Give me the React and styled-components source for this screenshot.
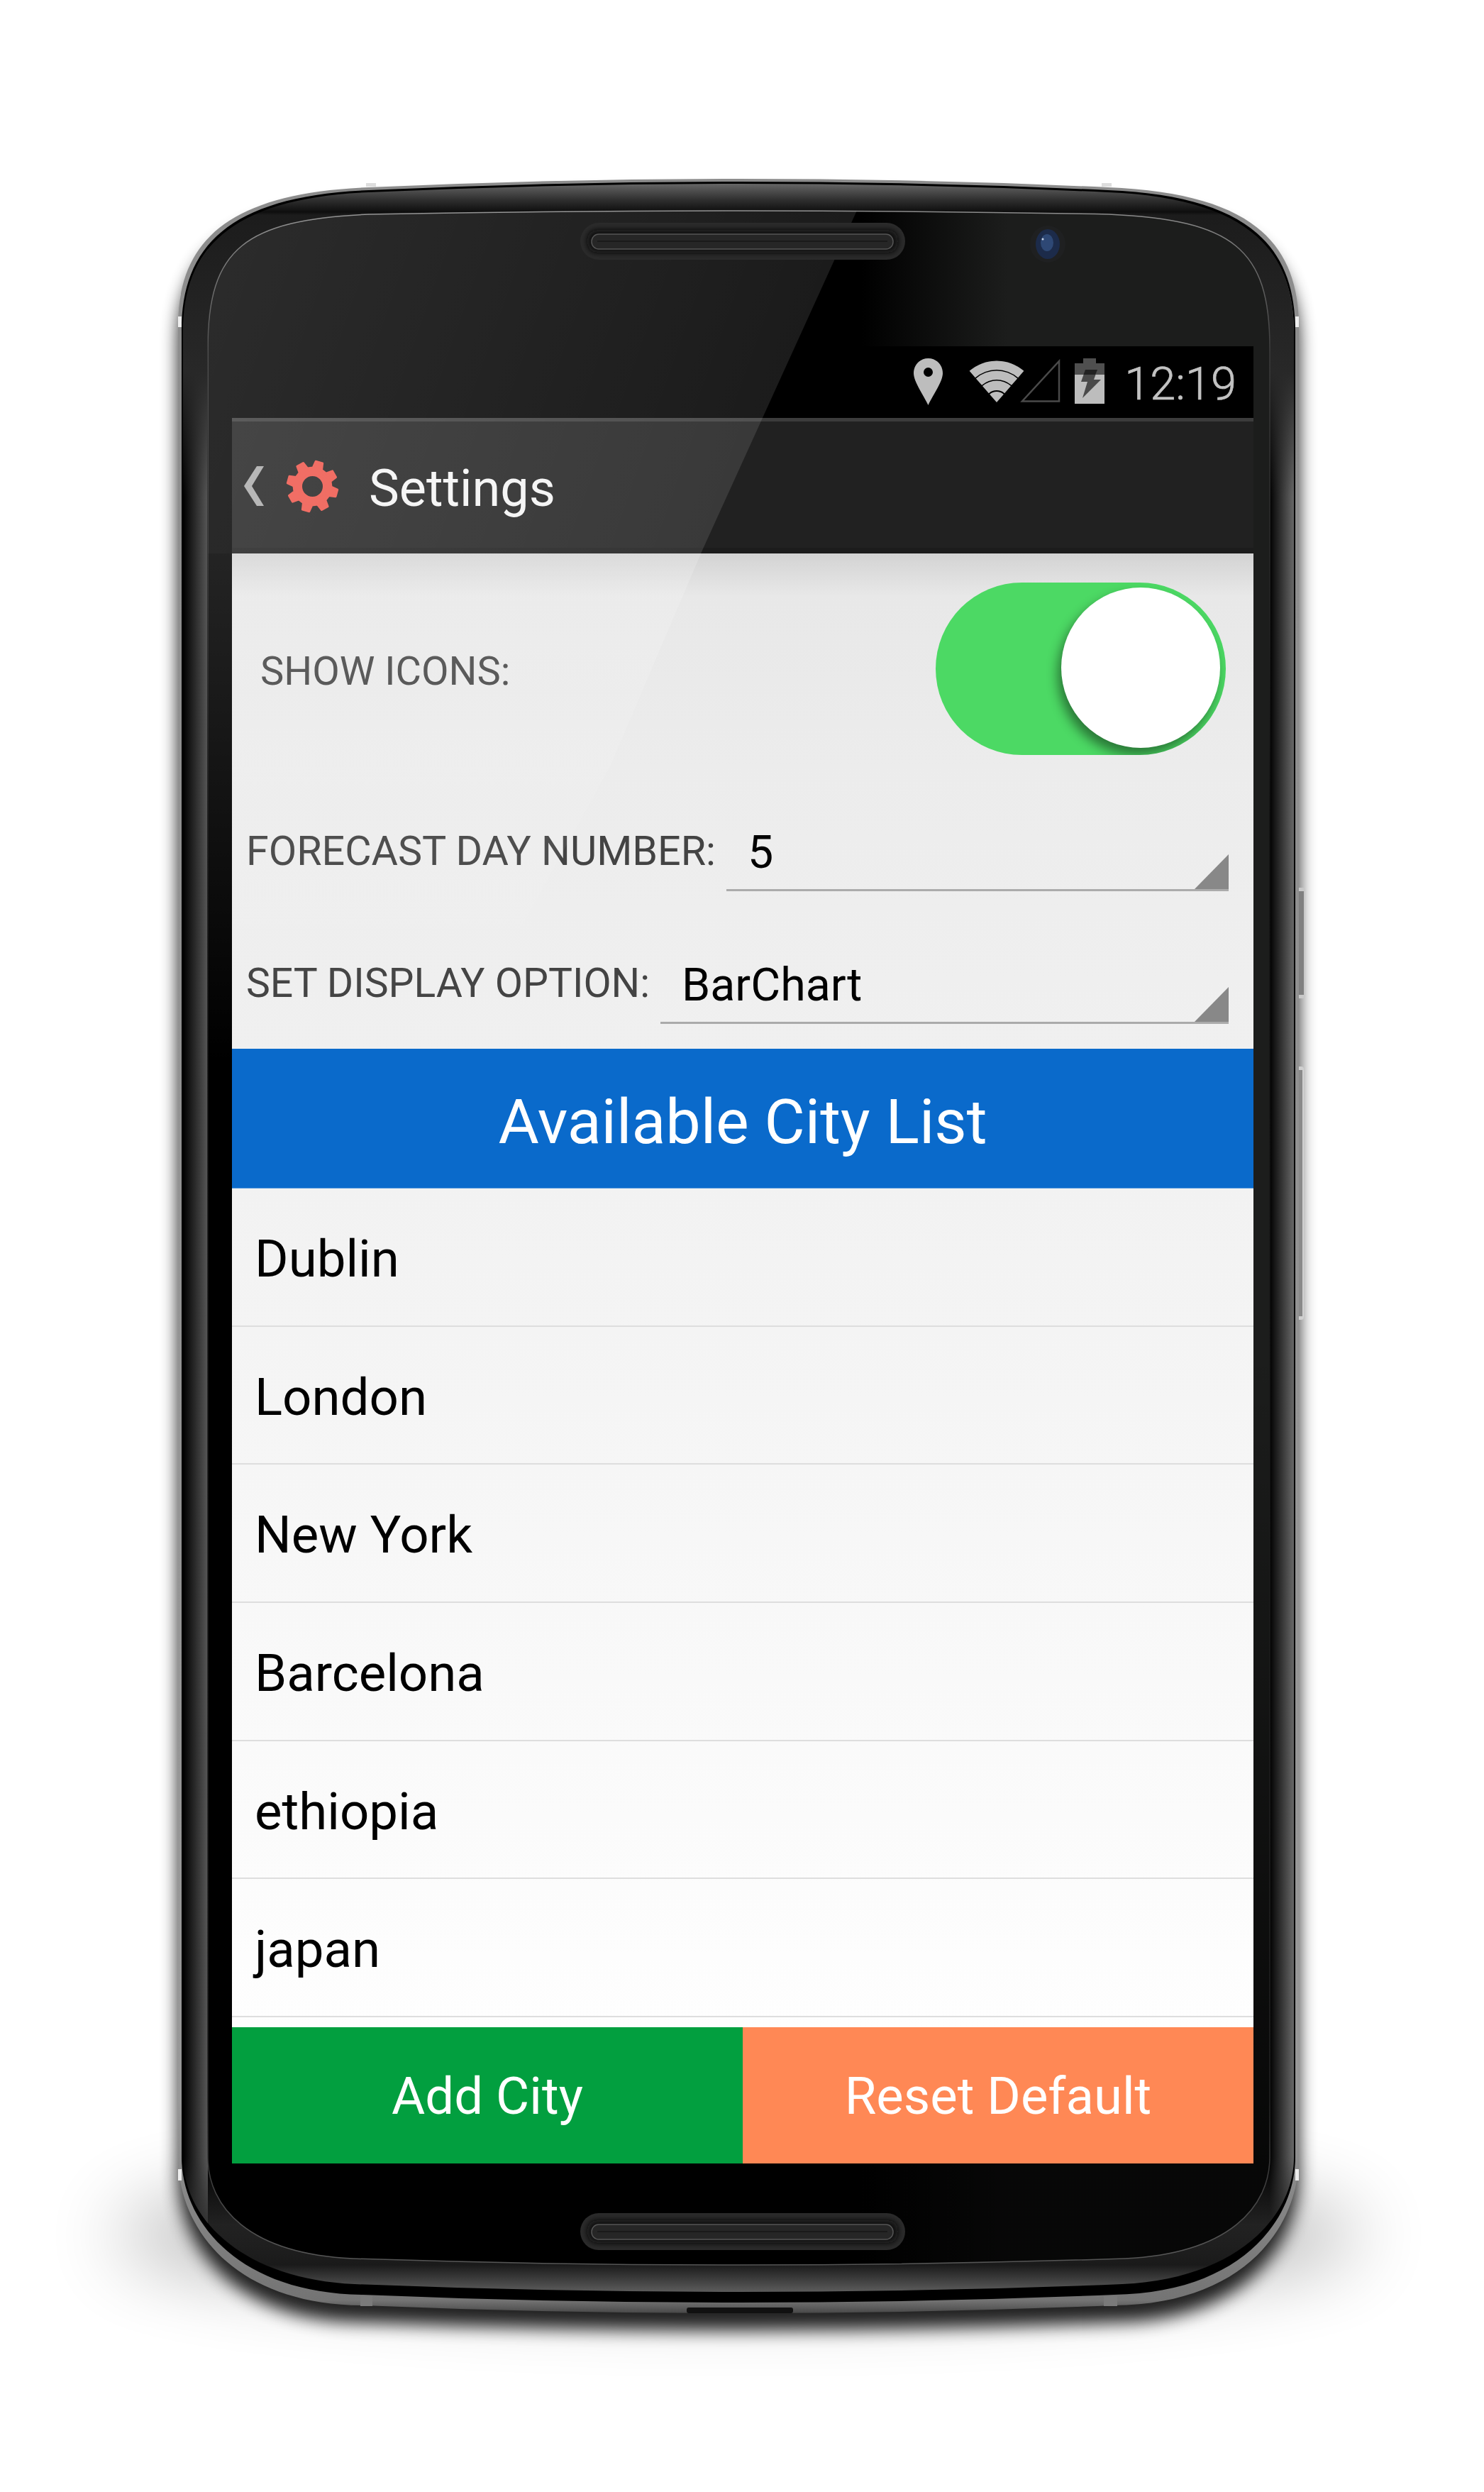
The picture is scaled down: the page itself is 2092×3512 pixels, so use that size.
import styled, { createGlobalStyle } from "styled-components";

const cities = ["Dublin", "London", "New York", "Barcelona", "ethiopia", "japan"];

// outline of the phone and its inner layers, left half given, right half mirrored
const bodyPath = ({ l, r, top, bottom, t, b }) => {
  const cx = (l + r) / 2;
  const m = (x) => l + r - x;
  return [
    `M${l} ${t.y0}`,
    `C${l} ${t.c1} ${t.c2x} ${t.c2y} ${t.x} ${t.y}`,
    `Q${(t.x + cx) / 2} ${top} ${cx} ${top}`,
    `Q${m((t.x + cx) / 2)} ${top} ${m(t.x)} ${t.y}`,
    `C${m(t.c2x)} ${t.c2y} ${r} ${t.c1} ${r} ${t.y0}`,
    `L${r} ${b.y0}`,
    `C${r} ${b.c1} ${m(b.c2x)} ${b.c2y} ${m(b.x)} ${b.y}`,
    `Q${m((b.x + cx) / 2)} ${bottom} ${cx} ${bottom}`,
    `Q${(b.x + cx) / 2} ${bottom} ${b.x} ${b.y}`,
    `C${b.c2x} ${b.c2y} ${l} ${b.c1} ${l} ${b.y0}`,
    "Z",
  ].join(" ");
};

const metalPath = bodyPath({
  l: 251, r: 1831, top: 252, bottom: 3260,
  t: { y0: 461, c1: 340, c2x: 320, c2y: 272, x: 520, y: 264 },
  b: { y0: 3040, c1: 3140, c2x: 330, c2y: 3248, x: 512, y: 3249 },
});
const blackPath = bodyPath({
  l: 256, r: 1826, top: 256, bottom: 3245,
  t: { y0: 466, c1: 345, c2x: 325, c2y: 276, x: 520, y: 268 },
  b: { y0: 3040, c1: 3130, c2x: 335, c2y: 3232, x: 512, y: 3234 },
});
const bezelPath = bodyPath({
  l: 258, r: 1824, top: 259, bottom: 3230,
  t: { y0: 468, c1: 348, c2x: 328, c2y: 279, x: 520, y: 271 },
  b: { y0: 3040, c1: 3125, c2x: 340, c2y: 3212, x: 500, y: 3219 },
});
const glassPath = bodyPath({
  l: 293, r: 1790, top: 297, bottom: 3192,
  t: { y0: 490, c1: 350, c2x: 345, c2y: 310, x: 520, y: 302 },
  b: { y0: 3040, c1: 3110, c2x: 350, c2y: 3176, x: 497, y: 3183 },
});

const gearPath = () => {
  const cx = 37.5;
  const cy = 37.5;
  const pt = (r, deg) => {
    const a = ((deg - 90) * Math.PI) / 180;
    return `${(cx + r * Math.cos(a)).toFixed(2)} ${(cy + r * Math.sin(a)).toFixed(2)}`;
  };
  let d = "";
  for (let i = 0; i < 8; i++) {
    const c = 15.5 + i * 45;
    d += `${i ? "L" : "M"}${pt(26.5, c - 14)} L${pt(35.5, c - 8)} L${pt(35.5, c + 8)} L${pt(26.5, c + 14)} `;
  }
  d += "Z ";
  d += `M${cx - 16} ${cy} a16 16 0 1 0 32 0 a16 16 0 1 0 -32 0Z`;
  return d;
};

const wifiBand = (outer, inner) => {
  const cx = 39;
  const cy = 59;
  const s = Math.sin((41 * Math.PI) / 180);
  const c = Math.cos((41 * Math.PI) / 180);
  const p = (r, sign) => `${(cx + sign * r * s).toFixed(2)} ${(cy - r * c).toFixed(2)}`;
  if (!inner) return `M${cx} ${cy} L${p(outer, -1)} A${outer} ${outer} 0 0 1 ${p(outer, 1)}Z`;
  return `M${p(inner, -1)} L${p(outer, -1)} A${outer} ${outer} 0 0 1 ${p(outer, 1)} L${p(inner, 1)} A${inner} ${inner} 0 0 0 ${p(inner, -1)}Z`;
};

const GlobalStyle = createGlobalStyle`
  html, body {
    margin: 0;
    background: #fff;
  }
`;

const Page = styled.div`
  position: relative;
  box-sizing: border-box;
  width: 2092px;
  height: 3512px;
  padding: 488px 0 0 327px;
  overflow: hidden;
  background: #fff;
  font-family: Roboto, "Liberation Sans", sans-serif;
`;

const PhoneArt = styled.svg`
  position: absolute;
  top: 0;
  left: 0;
  z-index: 0;
`;

const GlassArt = styled(PhoneArt)`
  z-index: 2;
  pointer-events: none;
`;

const Screen = styled.div`
  position: relative;
  z-index: 1;
  display: flex;
  flex-direction: column;
  width: 1440px;
  height: 2561px;
`;

const StatusBar = styled.div`
  display: flex;
  align-items: flex-start;
  justify-content: flex-end;
  box-sizing: border-box;
  height: 101px;
  padding: 17px 24px 0 0;
  background: #000;
`;

const StatusIcon = styled.svg`
  flex: none;
  margin-left: ${(p) => p.$gap}px;
  margin-top: ${(p) => p.$top || 0}px;
`;

const Clock = styled.span`
  margin-left: 28px;
  color: #c2c2c2;
  font-size: 65px;
  font-weight: 300;
  line-height: 64px;
  margin-top: 4px;
  -webkit-text-stroke: 0.7px #c2c2c2;
`;

const ActionBar = styled.div`
  display: flex;
  align-items: center;
  box-sizing: border-box;
  height: 191px;
  padding-left: 17px;
  background: #212121;
  border-top: 5px solid #3c3c3c;
  box-shadow: inset 0 -8px 0 #1c1c1c;
`;

const BackChevron = styled.svg`
  flex: none;
  margin-bottom: 4px;
`;

const GearIcon = styled.svg`
  flex: none;
  margin-left: 31px;
  margin-bottom: 4px;
`;

const Title = styled.span`
  margin: 4px 0 0 42px;
  color: #f4f4f4;
  font-size: 72px;
  line-height: 80px;
`;

const Panel = styled.div`
  display: flex;
  flex-direction: column;
  box-sizing: border-box;
  height: 698px;
  padding-top: 41px;
  background: linear-gradient(#d3d3d3, #e8e8e8 60px, #ececec 300px, #f0f0f0);
`;

const ToggleRow = styled.div`
  display: flex;
  align-items: center;
  justify-content: space-between;
  height: 243px;
  padding: 0 39px 0 40px;
`;

const FieldLabel = styled.span`
  flex: none;
  color: #434343;
  font-size: ${(p) => p.$size}px;
  line-height: 60px;
  position: relative;
  top: ${(p) => p.$shift || 0}px;
`;

const Switch = styled.div`
  position: relative;
  width: 409px;
  height: 243px;
  border-radius: 122px;
  background: #4cd964;
  overflow: hidden;
`;

const Knob = styled.div`
  position: absolute;
  top: 7px;
  right: 8px;
  width: 224px;
  height: 226px;
  border-radius: 50%;
  background: #fff;
  box-shadow: -5px 10px 16px rgba(0, 0, 0, 0.45);
`;

const SelectRow = styled.div`
  display: flex;
  align-items: flex-start;
  height: 110px;
  margin-top: ${(p) => p.$top}px;
  padding: 0 35px 0 20px;
`;

const Select = styled.div`
  position: relative;
  flex: 1;
  box-sizing: border-box;
  height: 110px;
  margin-left: 15px;
  padding-left: 30px;
  border-bottom: 3px solid #ababab;
  color: #000;
  font-size: 64.5px;
  line-height: 110px;

  &::after {
    content: "";
    position: absolute;
    right: 0;
    bottom: 0;
    width: 48px;
    height: 49px;
    background: #888;
    clip-path: polygon(100% 0, 100% 100%, 0 100%);
  }
`;

const ListHeader = styled.div`
  box-sizing: border-box;
  height: 197px;
  padding-top: 10px;
  border-bottom: 1px solid #5b9bdc;
  background: #0a6acb;
  color: #fff;
  font-size: 88px;
  line-height: 186px;
  text-align: center;
`;

const CityList = styled.div`
  flex: 1;
  background: linear-gradient(#f2f2f2, #fefefe);
`;

const CityRow = styled.div`
  box-sizing: border-box;
  height: 194.7px;
  padding: 8px 0 0 32px;
  border-bottom: 2px solid #dedede;
  color: #000;
  font-size: 72.6px;
  line-height: 184.7px;
`;

const ButtonBar = styled.div`
  display: flex;
  height: 192px;
`;

const ActionButton = styled.div`
  flex: 1;
  box-sizing: border-box;
  padding-top: 4px;
  background: ${(p) => p.$color};
  color: #fff;
  font-size: 72.5px;
  line-height: 188px;
  text-align: center;
`;

const Speaker = ({ x, y }) => (
  <g>
    <rect x={x} y={y} width="458" height="52" rx="26" fill="#2b2b2b" />
    <rect x={x + 10} y={y + 10} width="438" height="32" rx="14" fill="#080808" filter="url(#soft)" />
    <rect x={x + 16} y={y + 16} width="425" height="21" rx="10" fill="#262626" stroke="#555" strokeWidth="1.5" />
    <rect x={x + 24} y={y + 25} width="409" height="2" fill="#1a1a1a" />
  </g>
);

const App = () => (
  <Page>
    <GlobalStyle />
    <PhoneArt width="2092" height="3512" viewBox="0 0 2092 3512">
      <defs>
        <filter id="soft" x="-10%" y="-50%" width="120%" height="200%">
          <feGaussianBlur stdDeviation="4" />
        </filter>
        <filter id="shadowWide" x="-30%" y="-200%" width="160%" height="500%">
          <feGaussianBlur stdDeviation="55" />
        </filter>
        <filter id="shadowTight" x="-10%" y="-10%" width="120%" height="120%">
          <feGaussianBlur stdDeviation="12" />
        </filter>
        <linearGradient id="metal" gradientUnits="userSpaceOnUse" x1="0" y1="252" x2="0" y2="3260">
          <stop offset="0" stopColor="#8c8c8c" />
          <stop offset="0.9" stopColor="#989898" />
          <stop offset="0.994" stopColor="#747474" />
          <stop offset="1" stopColor="#484848" />
        </linearGradient>
        <linearGradient id="bezelSides" gradientUnits="userSpaceOnUse" x1="258" y1="0" x2="1824" y2="0">
          <stop offset="0" stopColor="#000" />
          <stop offset="0.0223" stopColor="#575757" />
          <stop offset="0.0224" stopColor="#000" />
          <stop offset="0.978" stopColor="#000" />
          <stop offset="1" stopColor="#686868" />
        </linearGradient>
        <linearGradient id="bezelTop" gradientUnits="userSpaceOnUse" x1="0" y1="259" x2="0" y2="700">
          <stop offset="0" stopColor="#666" />
          <stop offset="0.05" stopColor="#303030" />
          <stop offset="0.09" stopColor="#0e0e0e" />
          <stop offset="0.1" stopColor="#1c1c1c" />
          <stop offset="0.6" stopColor="#282828" />
          <stop offset="1" stopColor="#282828" stopOpacity="0" />
        </linearGradient>
        <linearGradient id="bezelBottom" gradientUnits="userSpaceOnUse" x1="0" y1="3040" x2="0" y2="3230">
          <stop offset="0" stopColor="#2c2c2c" stopOpacity="0" />
          <stop offset="0.5" stopColor="#2a2a2a" stopOpacity="0.8" />
          <stop offset="0.8" stopColor="#1a1a1a" />
          <stop offset="1" stopColor="#5c5c5c" />
        </linearGradient>
        <linearGradient id="glassTone" gradientUnits="userSpaceOnUse" x1="1215" y1="0" x2="1420" y2="0">
          <stop offset="0" stopColor="#000" />
          <stop offset="1" stopColor="#1c1d1c" />
        </linearGradient>
        <linearGradient id="glassFade" gradientUnits="userSpaceOnUse" x1="0" y1="1900" x2="0" y2="3050">
          <stop offset="0" stopColor="#000" stopOpacity="0" />
          <stop offset="1" stopColor="#000" stopOpacity="0.75" />
        </linearGradient>
        <linearGradient id="glassEdge" gradientUnits="userSpaceOnUse" x1="0" y1="296" x2="0" y2="3192">
          <stop offset="0" stopColor="#8c8c8c" />
          <stop offset="0.07" stopColor="#3a3a3a" />
          <stop offset="0.3" stopColor="#111" />
          <stop offset="0.92" stopColor="#222" />
          <stop offset="0.99" stopColor="#555" />
        </linearGradient>
      </defs>

      <ellipse cx="1041" cy="3150" rx="880" ry="90" fill="#000" opacity="0.3" filter="url(#shadowWide)" />
      <path d={metalPath} transform="translate(0 24)" fill="#000" opacity="0.85" filter="url(#shadowTight)" />

      <rect x="1825" y="1251" width="15" height="156" rx="4" fill="#c8c8c8" />
      <rect x="1825" y="1256" width="13" height="146" fill="#808080" />
      <rect x="1825" y="1503" width="13" height="357" rx="4" fill="#d0d0d0" />
      <rect x="1825" y="1508" width="11" height="347" fill="#8a8a8a" />

      <path d={metalPath} fill="url(#metal)" />
      <path d={blackPath} fill="#000" />
      <path d={bezelPath} fill="url(#bezelSides)" />
      <path d={bezelPath} fill="url(#bezelTop)" />
      <path d={bezelPath} fill="url(#bezelBottom)" />
      <path d={glassPath} fill="#000" />
      <path d={glassPath} fill="url(#glassTone)" />
      <path d={glassPath} fill="url(#glassFade)" />
      <path d={glassPath} fill="none" stroke="url(#glassEdge)" strokeWidth="1.5" />

      <rect x="251" y="446" width="5" height="15" fill="#eee" />
      <rect x="1826" y="446" width="5" height="15" fill="#eee" />
      <rect x="251" y="3057" width="5" height="16" fill="#eee" />
      <rect x="1826" y="3057" width="5" height="16" fill="#eee" />
      <rect x="516" y="258" width="14" height="5" fill="#ddd" />
      <rect x="1553" y="258" width="14" height="5" fill="#ddd" />
      <rect x="508" y="3236" width="17" height="14" fill="#7a7a7a" />
      <rect x="1556" y="3236" width="19" height="14" fill="#7a7a7a" />
      <rect x="968" y="3252" width="150" height="8" rx="3" fill="#111" />

      <Speaker x={818} y={3119} />
    </PhoneArt>

    <Screen>
      <StatusBar>
        <StatusIcon $gap={0} width="41" height="66" viewBox="0 0 41 66">
          <path
            fillRule="evenodd"
            fill="#bdbdbd"
            d="M20.5 0C9 0 0 9 0 21C0 33 14 52 20.5 66C27 52 41 33 41 21C41 9 32 0 20.5 0ZM20.5 13a6.5 6.5 0 1 1 0 13a6.5 6.5 0 1 1 0-13Z"
          />
        </StatusIcon>
        <StatusIcon $gap={37} $top={3} width="78" height="59" viewBox="0 0 78 59">
          <path fill="#bdbdbd" d={wifiBand(58.5, 46)} />
          <path fill="#bdbdbd" d={wifiBand(44.5, 32)} />
          <path fill="#bdbdbd" d={wifiBand(30.5, 17)} />
          <path fill="#bdbdbd" d={wifiBand(15)} />
        </StatusIcon>
        <StatusIcon $gap={-7} width="58" height="62" viewBox="0 0 58 62">
          <path d="M56 4V60.5H4Z" fill="none" stroke="#4a4a4a" strokeWidth="2.5" />
        </StatusIcon>
        <StatusIcon $gap={20} width="42" height="64" viewBox="0 0 42 64">
          <path fill="#4f4f4f" d="M12 0H30V7H42V23H0V7H12Z" />
          <rect y="23" width="42" height="41" fill="#bdbdbd" />
          <path fill="#4a4a4a" d="M15 16H32L27 30H37L11 56L18 33H9Z" />
          <path fill="#222" d="M15 16H32L29 23H12.5Z" />
        </StatusIcon>
        <Clock>12:19</Clock>
      </StatusBar>

      <ActionBar>
        <BackChevron width="28" height="56" viewBox="0 0 28 56">
          <path fill="#aaa" d="M18 0H28L11 28L28 56H18L0 28Z" />
        </BackChevron>
        <GearIcon width="75" height="75" viewBox="0 0 75 75">
          <path
            d={gearPath()}
            fill="#ee5449"
            fillRule="evenodd"
            stroke="#ee5449"
            strokeWidth="3"
            strokeLinejoin="round"
          />
        </GearIcon>
        <Title>Settings</Title>
      </ActionBar>

      <Panel>
        <ToggleRow>
          <FieldLabel $size={56} $shift={3}>SHOW ICONS:</FieldLabel>
          <Switch>
            <Knob />
          </Switch>
        </ToggleRow>
        <SelectRow $top={82}>
          <FieldLabel $size={57.4} $shift={24}>FORECAST DAY NUMBER:</FieldLabel>
          <Select>5</Select>
        </SelectRow>
        <SelectRow $top={77}>
          <FieldLabel $size={57} $shift={23}>SET DISPLAY OPTION:</FieldLabel>
          <Select>BarChart</Select>
        </SelectRow>
      </Panel>

      <ListHeader>Available City List</ListHeader>

      <CityList>
        {cities.map((city) => (
          <CityRow key={city}>{city}</CityRow>
        ))}
      </CityList>

      <ButtonBar>
        <ActionButton $color="#029f3f">Add City</ActionButton>
        <ActionButton $color="#ff8855">Reset Default</ActionButton>
      </ButtonBar>
    </Screen>

    <GlassArt width="2092" height="3512" viewBox="0 0 2092 3512">
      <defs>
        <clipPath id="glassClip">
          <path d={glassPath} />
        </clipPath>
        <linearGradient id="glareTop" gradientUnits="userSpaceOnUse" x1="300" y1="400" x2="1150" y2="700">
          <stop offset="0" stopColor="#fff" stopOpacity="0.17" />
          <stop offset="1" stopColor="#fff" stopOpacity="0.1" />
        </linearGradient>
        <linearGradient id="glarePanel" gradientUnits="userSpaceOnUse" x1="0" y1="780" x2="0" y2="1420">
          <stop offset="0" stopColor="#fff" stopOpacity="0.17" />
          <stop offset="1" stopColor="#fff" stopOpacity="0" />
        </linearGradient>
        <linearGradient id="glareStrip" gradientUnits="userSpaceOnUse" x1="0" y1="780" x2="0" y2="1500">
          <stop offset="0" stopColor="#fff" stopOpacity="0.14" />
          <stop offset="1" stopColor="#fff" stopOpacity="0" />
        </linearGradient>
      </defs>
      <g clipPath="url(#glassClip)">
        <polygon points="293,290 1211,290 988,780 293,780" fill="url(#glareTop)" />
        <polygon points="327,780 988,780 860,1080 640,1478 327,1478" fill="url(#glarePanel)" />
        <rect x="293" y="780" width="34" height="720" fill="url(#glareStrip)" />
      </g>
      <Speaker x={818} y={314} />
      <ellipse cx="1477" cy="344" rx="25" ry="26" fill="#1f2021" />
      <ellipse cx="1477" cy="344" rx="17" ry="21" fill="#1c2b4a" />
      <ellipse cx="1476" cy="342" rx="9" ry="12" fill="#33507f" opacity="0.8" />
      <circle cx="1470" cy="337" r="1.5" fill="#c8d4e8" />
    </GlassArt>
  </Page>
);

export default App;
